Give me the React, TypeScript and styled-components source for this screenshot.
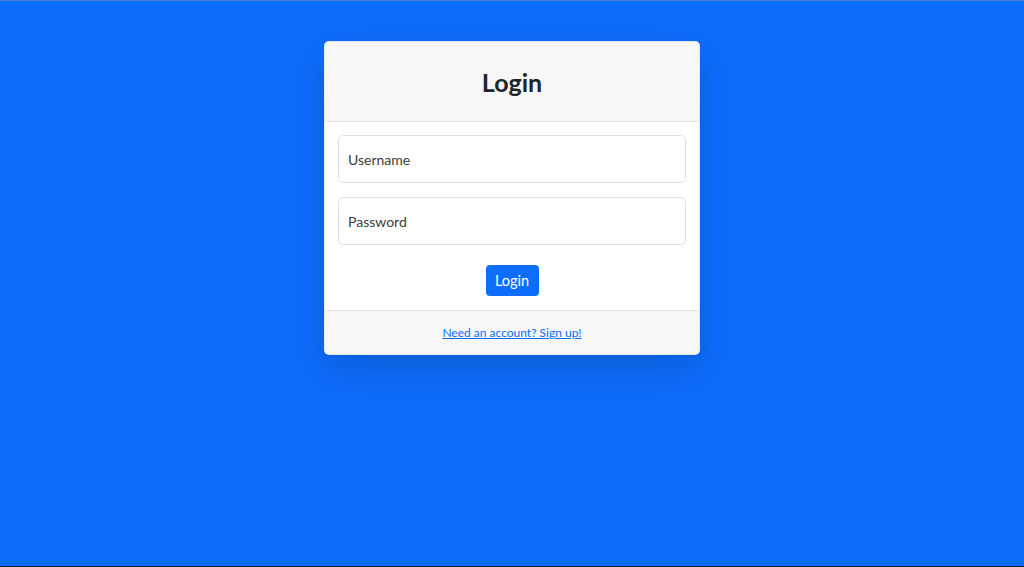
import styled, { createGlobalStyle } from "styled-components";

const GlobalStyle = createGlobalStyle`
  html, body {
    margin: 0;
    padding: 0;
  }
  body {
    font-family: Lato, "Noto Sans", "Liberation Sans", sans-serif;
    background-color: #0d6efd;
  }
  * {
    box-sizing: border-box;
  }
`;

const Page = styled.div`
  height: 567px;
  display: flex;
  flex-direction: column;
  align-items: center;
  padding-top: 40px;
  background-color: #0d6efd;
  border-top: 1px solid #4a80d4;
  border-bottom: 1px solid #1b1b1b;
`;

const Card = styled.div`
  width: 376px;
  background-color: #fff;
  border: 1px solid rgba(0, 0, 0, 0.1);
  border-radius: 5px;
  overflow: hidden;
  box-shadow: 0 14px 40px rgba(0, 0, 0, 0.17);
`;

const CardHeader = styled.div`
  height: 80px;
  display: flex;
  align-items: center;
  justify-content: center;
  background-color: #f7f7f7;
  border-bottom: 1px solid #e3e3e3;
`;

const Title = styled.h3`
  margin: 0;
  font-size: 25px;
  font-weight: 700;
  color: #212529;
`;

const CardBody = styled.form`
  display: flex;
  flex-direction: column;
  gap: 14px;
  padding: 13px 13px 14px;
`;

const Input = styled.input`
  height: 48px;
  width: 100%;
  padding: 0 9px;
  font-family: inherit;
  font-size: 14px;
  color: #212529;
  background-color: #fff;
  border: 1px solid #dee2e6;
  border-radius: 5px;
  outline: none;
  &::placeholder {
    color: #3a3d40;
  }
`;

const ButtonRow = styled.div`
  display: flex;
  justify-content: center;
  padding-top: 6px;
`;

const Button = styled.button`
  height: 31px;
  width: 53px;
  padding: 0;
  font-family: inherit;
  font-size: 14.5px;
  color: #fff;
  background-color: #0d6efd;
  border: none;
  border-radius: 4px;
  cursor: pointer;
`;

const CardFooter = styled.div`
  height: 44px;
  display: flex;
  align-items: center;
  justify-content: center;
  background-color: #f7f7f7;
  border-top: 1px solid #e3e3e3;
`;

const FooterLink = styled.a`
  font-size: 12px;
  color: #0d6efd;
  text-decoration: underline;
`;

export default function App() {
  return (
    <>
      <GlobalStyle />
      <Page>
        <Card>
          <CardHeader>
            <Title>Login</Title>
          </CardHeader>
          <CardBody onSubmit={(e) => e.preventDefault()}>
            <Input type="text" placeholder="Username" />
            <Input type="password" placeholder="Password" />
            <ButtonRow>
              <Button type="submit">Login</Button>
            </ButtonRow>
          </CardBody>
          <CardFooter>
            <FooterLink href="#">Need an account? Sign up!</FooterLink>
          </CardFooter>
        </Card>
      </Page>
    </>
  );
}
